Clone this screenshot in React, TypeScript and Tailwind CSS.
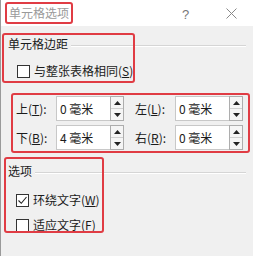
import React from "react";

const font = { fontFamily: '"Noto Sans CJK SC", "Noto Sans", sans-serif' };

function U({ c }: { c: string }) {
  return <span className="underline underline-offset-[1px]">{c}</span>;
}

function Check({ checked }: { checked?: boolean }) {
  return (
    <div className="w-[13px] h-[13px] border border-[#333] bg-white flex items-center justify-center shrink-0">
      {checked && (
        <svg width="11" height="11" viewBox="0 0 11 11">
          <path d="M1.5 5.5 L4.3 8.3 L9.5 2" fill="none" stroke="#222" strokeWidth="1.1" />
        </svg>
      )}
    </div>
  );
}

function Spin() {
  return (
    <div className="w-[14px] h-full flex flex-col border border-[#adadad] bg-[#f0f0f0]">
      <div className="flex-1 flex items-center justify-center border-b border-[#d0d0d0] bg-[#f5f5f5]">
        <svg width="7" height="4" viewBox="0 0 7 4"><path d="M0 4 L3.5 0 L7 4 Z" fill="#222" /></svg>
      </div>
      <div className="flex-1 flex items-center justify-center bg-[#f5f5f5]">
        <svg width="7" height="4" viewBox="0 0 7 4"><path d="M0 0 L3.5 4 L7 0 Z" fill="#222" /></svg>
      </div>
    </div>
  );
}

function Field({ label, k, value }: { label: string; k: string; value: string }) {
  return (
    <div className="flex items-center h-[25px]">
      <div className="w-[40px] text-[12px] leading-[18px] text-[#1b1b1b]">
        {label}(<U c={k} />):
      </div>
      <div className="flex h-full">
        <div className="w-[54px] h-full bg-white border border-[#c8c8c8] border-r-0 flex items-center pl-[3px] text-[12px] text-[#1b1b1b]">
          {value}
        </div>
        <Spin />
      </div>
    </div>
  );
}

function GroupHeader({ text }: { text: string }) {
  return (
    <div className="flex items-center pl-[7px] pr-[7px] h-[18px]">
      <span className="text-[12px] leading-[18px] text-[#1b1b1b]">{text}</span>
      <div className="flex-1 ml-[3px] mt-[3px] flex flex-col">
        <div className="h-px bg-[#d5d5d5]" />
        <div className="h-px bg-white" />
      </div>
    </div>
  );
}

const red = "absolute border-2 border-[#e03c44] rounded-[3px] pointer-events-none";

export default function App() {
  return (
    <div className="w-[253px] h-[256px] bg-[#f0f0f0] relative overflow-hidden border-l border-[#9a9a9a]" style={font}>
      {/* title bar */}
      <div className="h-[26px] bg-white flex items-center relative">
        <span className="ml-[8px] text-[12px] leading-[18px] text-[#9a9a9a]">单元格选项</span>
        <span className="absolute left-[181px] top-[5px] text-[13px] text-[#777]" style={{ fontFamily: '"Liberation Sans", sans-serif' }}>?</span>
        <svg className="absolute left-[225px] top-[8px]" width="11" height="11" viewBox="0 0 11 11">
          <path d="M0.5 0.5 L10.5 10.5 M10.5 0.5 L0.5 10.5" stroke="#888" strokeWidth="1" />
        </svg>
        <div className={red + " left-[4px] top-[2px] w-[68px] h-[22px]"} />
      </div>

      {/* section 1 */}
      <div className="relative pt-[9px]">
        <GroupHeader text="单元格边距" />
        <div className="flex items-center gap-[4px] ml-[16px] mt-[8px] h-[20px]">
          <Check />
          <span className="text-[12px] leading-[18px] text-[#1b1b1b]">
            与整张表格相同(<U c="S" />)
          </span>
        </div>
        <div className={red + " left-[1px] top-[7px] w-[133px] h-[50px]"} />
      </div>

      {/* inputs */}
      <div className="relative mt-[15px] ml-[15px] flex flex-col gap-[4px]">
        <div className="flex gap-[11px]">
          <Field label="上" k="T" value="0 毫米" />
          <Field label="左" k="L" value="0 毫米" />
        </div>
        <div className="flex gap-[11px]">
          <Field label="下" k="B" value="4 毫米" />
          <Field label="右" k="R" value="0 毫米" />
        </div>
        <div className={red + " left-[-5px] top-[-3px] w-[239px] h-[60px]"} />
      </div>

      {/* section 2 */}
      <div className="relative mt-[12px]">
        <GroupHeader text="选项" />
        <div className="flex items-center gap-[4px] ml-[15px] mt-[10px] h-[20px]">
          <Check checked />
          <span className="text-[12px] leading-[18px] text-[#1b1b1b]">
            环绕文字(<U c="W" />)
          </span>
        </div>
        <div className="flex items-center gap-[4px] ml-[15px] mt-[5px] h-[20px]">
          <Check />
          <span className="text-[12px] leading-[18px] text-[#1b1b1b]">
            适应文字(<U c="F" />)
          </span>
        </div>
        <div className={red + " left-[3px] top-[-5px] w-[100px] h-[76px]"} />
      </div>
    </div>
  );
}
